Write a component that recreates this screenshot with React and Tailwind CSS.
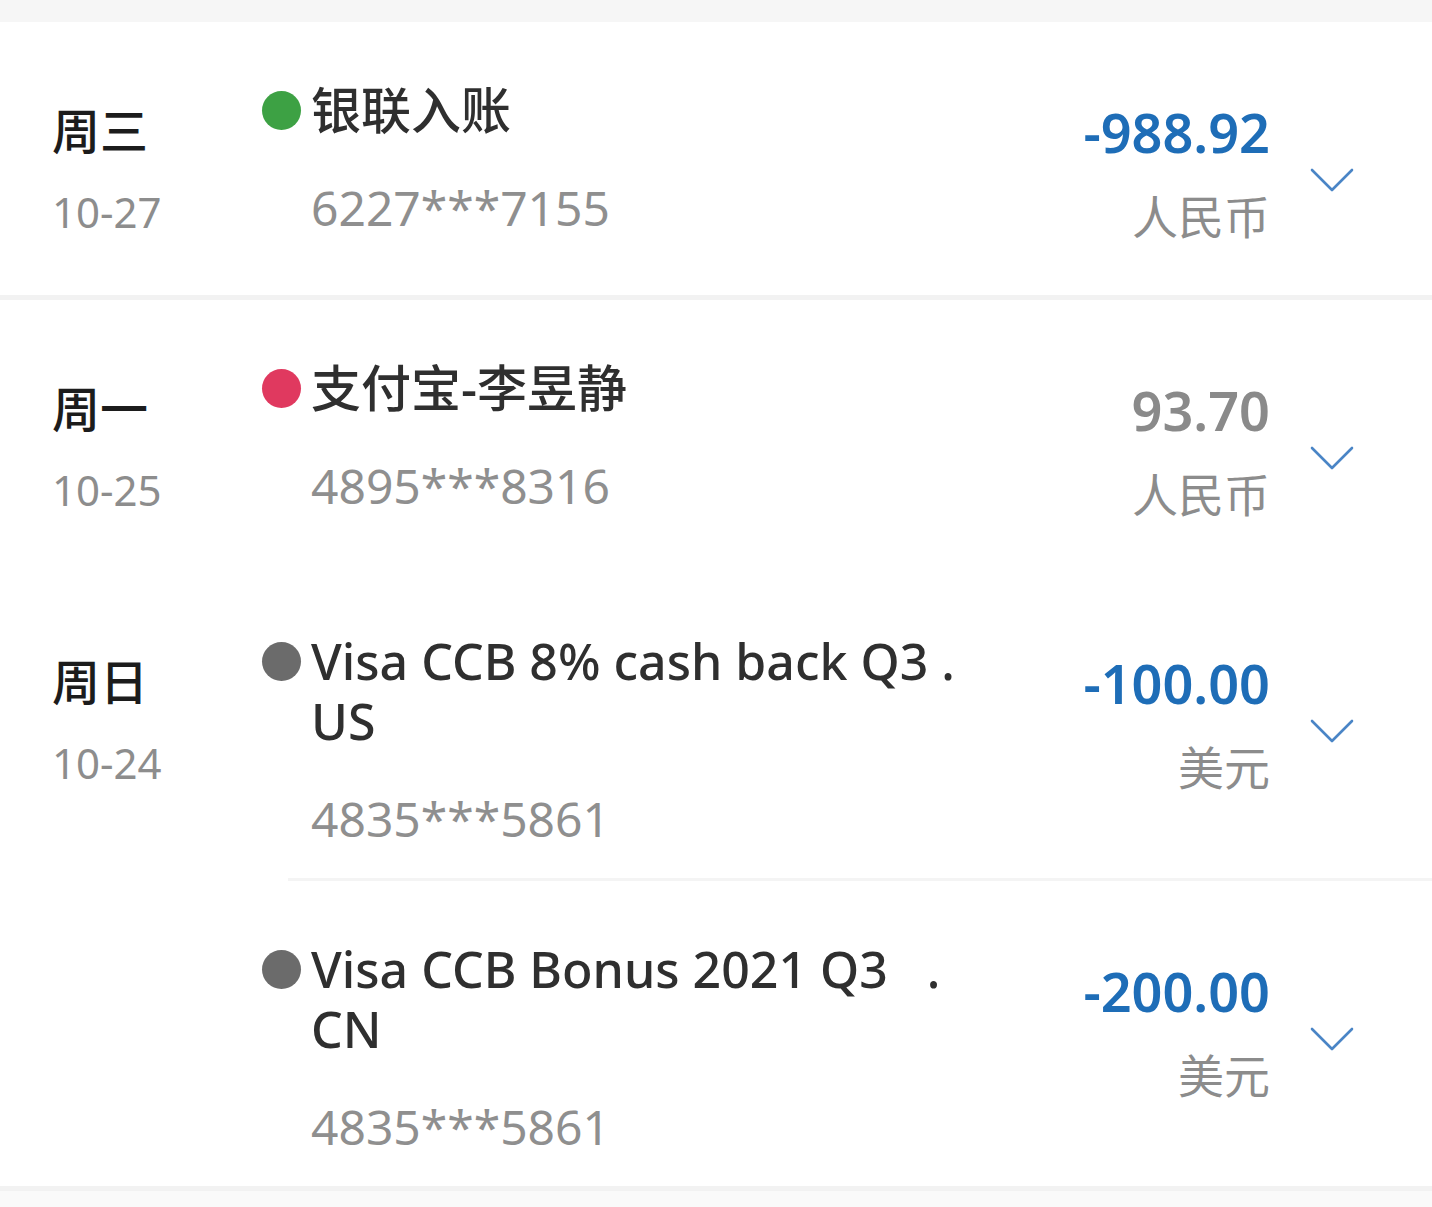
import React from "react";

const font = { fontFamily: '"Noto Sans", "Noto Sans CJK SC", sans-serif' };

const records = [
    {
        day: '周三', date: '10-27', dot: 'bg-[#3da144]',
        title: ['银联入账'], card: '6227***7155',
        amount: '-988.92', positive: false, currency: '人民币',
        divider: 'full',
    },
    {
        day: '周一', date: '10-25', dot: 'bg-[#e0395f]',
        title: ['支付宝-李昱静'], card: '4895***8316',
        amount: '93.70', positive: true, currency: '人民币',
        divider: 'none',
    },
    {
        day: '周日', date: '10-24', dot: 'bg-[#6b6b6b]',
        title: ['Visa CCB 8% cash back Q3 .', 'US'], card: '4835***5861',
        amount: '-100.00', positive: false, currency: '美元',
        divider: 'inset',
    },
    {
        day: '', date: '', dot: 'bg-[#6b6b6b]',
        title: ['Visa CCB Bonus 2021 Q3   .', 'CN'], card: '4835***5861',
        amount: '-200.00', positive: false, currency: '美元',
        divider: 'full',
    },
];

function Chevron() {
    return (
        <svg width="44" height="26" viewBox="0 0 44 26" fill="none">
            <path d="M2 3 L22 23 L42 3" stroke="#4a85c6" strokeWidth="2.6" strokeLinecap="round" strokeLinejoin="round" />
        </svg>
    );
}

function Row({ r }) {
    return (
        <div>
            <div className="flex min-h-[273px] pt-[58px] pb-[31px] pl-[52px] pr-[78px]">
                <div className="w-[210px] shrink-0 pt-[23px]">
                    {r.day && (
                        <>
                            <div className="text-[48px] leading-[56px] font-medium text-[#1c1c1c]">{r.day}</div>
                            <div className="mt-[27px] text-[42px] leading-[52px] text-[#8d8d8d]">{r.date}</div>
                        </>
                    )}
                </div>

                <div className="flex flex-1 gap-[10px]">
                    <div className="flex h-[60px] items-center">
                        <span className={`block h-[39px] w-[39px] rounded-full ${r.dot}`}></span>
                    </div>
                    <div>
                        {r.title.map((line, i) => (
                            <div key={i} className="whitespace-pre text-[50px] leading-[60px] font-medium text-[#2f2f2f]">
                                {line}
                            </div>
                        ))}
                        <div className="mt-[40px] text-[48px] leading-[56px] text-[#8f8f8f]">{r.card}</div>
                    </div>
                </div>

                <div className="flex items-start">
                    <div className="pt-[21px] text-right">
                        <div className={`text-[54px] leading-[62px] font-semibold ${r.positive ? 'text-[#8a8a8a]' : 'text-[#1e6db7]'}`}>
                            {r.amount}
                        </div>
                        <div className="mt-[25px] text-[46px] leading-[56px] text-[#8c8c8c]">{r.currency}</div>
                    </div>
                    <div className="ml-[40px] mt-[87px]">
                        <Chevron />
                    </div>
                </div>
            </div>
            {r.divider === 'full' && <div className="h-[5px] bg-[#f2f2f2]"></div>}
            {r.divider === 'inset' && <div className="ml-[288px] h-[3px] bg-[#f4f4f4]"></div>}
        </div>
    );
}

export default function App() {
    return (
        <div className="min-h-screen bg-[#fafafa]" style={font}>
            <div className="h-[22px] bg-[#f6f6f6]"></div>
            <div className="bg-white">
                {records.map((r, i) => (
                    <Row key={i} r={r} />
                ))}
            </div>
        </div>
    );
}
